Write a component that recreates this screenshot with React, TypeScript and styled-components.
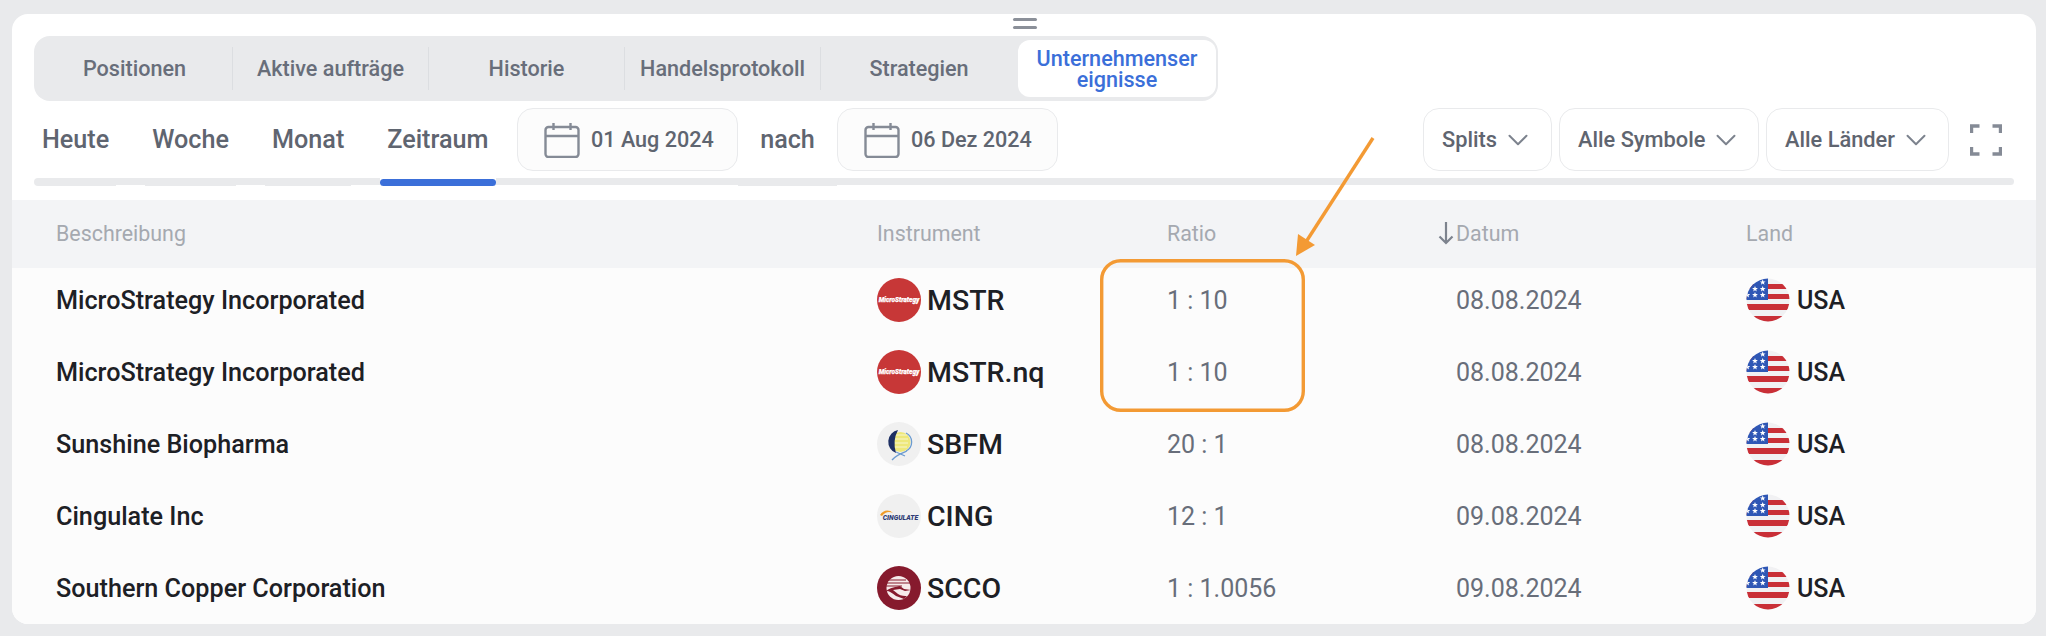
import React from 'react'
import styled, { createGlobalStyle } from 'styled-components'
import { ChevronDown } from 'lucide-react'

const GlobalStyle = createGlobalStyle`
	html, body {
		margin: 0;
		padding: 0;
		background: #e9eaec;
		font-family: Roboto, 'Liberation Sans', sans-serif;
	}
`

const Page = styled.div`
	position: relative;
	width: 2046px;
	height: 636px;
	padding: 14px 10px 12px 12px;
	box-sizing: border-box;
	overflow: hidden;
`

const Card = styled.div`
	height: 610px;
	background: #fff;
	border-radius: 16px;
	overflow: hidden;
	display: flex;
	flex-direction: column;
`

const Handle = styled.div`
	flex: 0 0 22px;
	display: flex;
	flex-direction: column;
	align-items: center;
	gap: 5px;
	padding-top: 4px;
	box-sizing: border-box;
	margin-left: 1px;

	&::before,
	&::after {
		content: '';
		width: 24px;
		height: 3px;
		border-radius: 2px;
		background: #8b9099;
	}
`

const TabBar = styled.div`
	display: flex;
	align-items: center;
	flex: 0 0 65px;
	width: 1184px;
	margin-left: 22px;
	padding-left: 3px;
	background: #e9eaec;
	border-radius: 16px;
	box-sizing: border-box;
`

const Tab = styled.div<{ $active?: boolean; $last?: boolean }>`
	display: flex;
	align-items: center;
	justify-content: center;
	text-align: center;
	flex: none;
	width: ${({ $active }) => ($active ? '198px' : '196px')};
	height: ${({ $active }) => ($active ? '57px' : '43px')};
	margin-left: ${({ $active }) => ($active ? '1px' : '0')};
	font-size: 21.6px;
	line-height: 21px;
	font-weight: 500;
	white-space: nowrap;
	color: ${({ $active }) => ($active ? '#3b6fd9' : '#686e7a')};
	background: ${({ $active }) => ($active ? '#fff' : 'transparent')};
	border-radius: ${({ $active }) => ($active ? '12px' : '0')};
	border-right: ${({ $active, $last }) =>
		$active || $last ? 'none' : '1px solid #dcdee1'};
	box-sizing: border-box;
`

const FilterRow = styled.div`
	display: flex;
	align-items: center;
	flex: 0 0 63px;
	margin: 7px 34px 0 22px;
`

const Period = styled.div`
	font-size: 25.2px;
	font-weight: 500;
	color: #5f6570;
`

const Periods = styled.div`
	display: flex;
	width: 483px;
	gap: 43px;
	padding-left: 8px;
	box-sizing: border-box;
`

const DateButton = styled.div`
	display: flex;
	align-items: center;
	gap: 11px;
	width: 221px;
	height: 63px;
	padding-left: 26px;
	box-sizing: border-box;
	background: #fcfcfc;
	border: 1px solid #e9eaec;
	border-radius: 16px;
	font-size: 21.6px;
	font-weight: 500;
	color: #5f6570;
`

const Nach = styled.div`
	width: 99px;
	text-align: center;
	font-size: 25.2px;
	font-weight: 500;
	color: #5f6570;
`

const Selects = styled.div`
	display: flex;
	align-items: center;
	gap: 7px;
	margin-left: auto;
`

const Select = styled.div<{ $width: number }>`
	display: flex;
	align-items: center;
	gap: 4px;
	width: ${({ $width }) => $width}px;
	height: 63px;
	padding-left: 18px;
	box-sizing: border-box;
	background: #fff;
	border: 1px solid #e9eaec;
	border-radius: 16px;
	font-size: 21.8px;
	font-weight: 500;
	color: #5f6570;
`

const FullscreenButton = styled.div`
	margin-left: 14px;
	display: flex;
`

const Rail = styled.div`
	display: flex;
	flex: 0 0 8px;
	margin: 7px 22px 0 22px;
`

const RailPiece = styled.div<{ $width?: number; $tall?: boolean; $active?: boolean }>`
	flex: ${({ $width }) => ($width ? `0 0 ${$width}px` : '1')};
	height: ${({ $tall }) => ($tall ? '8px' : '7px')};
	margin-top: ${({ $active }) => ($active ? '1px' : '0')};
	background: ${({ $active }) => ($active ? '#3b6fd9' : '#e9eaec')};
	border-radius: ${({ $active }) => ($active ? '4px' : '0')};

	&:first-child {
		border-radius: 4px 0 0 4px;
	}

	&:last-child {
		border-radius: 0 4px 4px 0;
	}
`

const Table = styled.div`
	margin-top: 14px;
	flex: 1;
	min-height: 0;
	background: #fcfcfc;
	display: flex;
	flex-direction: column;
`

const gridColumns = '821px 290px 289px 290px 1fr'

const HeadRow = styled.div`
	display: grid;
	grid-template-columns: ${gridColumns};
	align-items: center;
	flex: 0 0 68px;
	padding: 0 0 2px 44px;
	box-sizing: border-box;
	background: #f3f4f6;
	font-size: 21.4px;
	color: #a5a9b0;
`

const DateHead = styled.div`
	display: flex;
	align-items: center;
	gap: 1px;
	margin-left: -19px;
`

const Row = styled.div`
	display: grid;
	grid-template-columns: ${gridColumns};
	align-items: center;
	flex: 0 0 72px;
	padding-left: 44px;
	box-sizing: border-box;

	&:nth-child(2) {
		flex-basis: 68px;
		padding-bottom: 4px;
	}
`

const Name = styled.div`
	font-size: 25.2px;
	font-weight: 500;
	color: #1d2025;
`

const Instrument = styled.div`
	display: flex;
	align-items: center;
	gap: 6px;
	font-size: 28.5px;
	font-weight: 500;
	color: #1d2025;
`

const Muted = styled.div`
	font-size: 25px;
	color: #686e7a;
`

const Country = styled.div`
	display: flex;
	align-items: center;
	gap: 7px;
	font-size: 25px;
	font-weight: 500;
	color: #1d2025;
`

const Marks = styled.svg`
	position: absolute;
	left: 0;
	top: 0;
	pointer-events: none;
`

const CalendarIcon = () => (
	<svg width="36" height="36" viewBox="0 0 36 36" fill="none">
		<rect x="1.5" y="5" width="33" height="30" rx="3" stroke="#858b96" strokeWidth="2.4" />
		<path d="M1.5 14h33M9.5 1v7M26.5 1v7" stroke="#858b96" strokeWidth="2.4" />
	</svg>
)

const ExpandIcon = () => (
	<svg width="32" height="32" viewBox="0 0 32 32" fill="none" stroke="#858b96" strokeWidth="3.4">
		<path d="M1.5 9V2h8M22.5 2h8v7M1.5 23v7h8M30.5 23v7h-8" />
	</svg>
)

const Logo = ({ symbol }: { symbol: string }) => {
	if (symbol === 'SBFM') {
		return (
			<svg width="44" height="44" viewBox="0 0 44 44">
				<circle cx="22" cy="22" r="22" fill="#f0f0f0" />
				<circle cx="23.5" cy="20" r="10" fill="#eee87a" />
				<path d="M18 13h12M16 17h15M16 21h15M18 25h12" stroke="#f8f6cf" strokeWidth="1" />
				<path d="M21 8A12 12 0 0 0 19 31 30 30 0 0 1 21 8z" fill="#1d2f63" />
				<path d="M29 11a10 10 0 0 1 0 18M30 29c-5 2-11 4-15 9M19 30l9 4" fill="none" stroke="#6b9bd0" strokeWidth="1.3" />
			</svg>
		)
	}
	if (symbol === 'CING') {
		return (
			<svg width="44" height="44" viewBox="0 0 44 44">
				<circle cx="22" cy="22" r="22" fill="#f0f0f0" />
				<path d="M3 21c3-5 9-6 13-2-4-2-8-1-11 3z" fill="#f09a28" />
				<text x="23.5" y="25.8" fontSize="6.8" fontWeight="900" fontStyle="italic" textAnchor="middle" fill="#2d3a73">CINGULATE</text>
			</svg>
		)
	}
	if (symbol === 'SCCO') {
		return (
			<svg width="44" height="44" viewBox="0 0 44 44">
				<circle cx="22" cy="22" r="22" fill="#861a2d" />
				<circle cx="21.5" cy="22" r="12" fill="#f6eaea" />
				<path d="M9 14h20M9 17h24M9 20h16" stroke="#861a2d" strokeWidth="1.2" />
				<path d="M9 25c5-4 10-4 14-5l4 3 7 1-6 1-5-2-7 1 5 4c3 2 7 2 9 2l-3 3-8-3c-4-3-6-5-10-5z" fill="#861a2d" />
			</svg>
		)
	}
	return (
		<svg width="44" height="44" viewBox="0 0 44 44">
			<circle cx="22" cy="22" r="22" fill="#c73737" />
			<text x="22" y="24.3" fontSize="6.5" fontWeight="900" fontStyle="italic" textAnchor="middle" fill="#fff" stroke="#fff" strokeWidth="0.25">MicroStrategy</text>
		</svg>
	)
}

const starSpots = [
	[16.7, 4.3],
	[9, 11],
	[16.7, 11],
	[1.3, 17],
	[9, 17],
	[16.7, 17],
]

const starPoints = '0,-3 0.8,-0.9 2.9,-0.9 1.2,0.4 1.8,2.5 0,1.2 -1.8,2.5 -1.2,0.4 -2.9,-0.9 -0.8,-0.9'

const UsaFlag = ({ id }: { id: string }) => (
	<svg width="44" height="44" viewBox="0 0 44 44">
		<defs>
			<clipPath id={id}>
				<circle cx="22" cy="22" r="21.5" />
			</clipPath>
		</defs>
		<g clipPath={`url(#${id})`}>
			<rect width="44" height="44" fill="#f1f1f3" />
			<path d="M0 6h44v5H0zM0 16h44v5H0zM0 26h44v6H0zM0 38h44v6H0z" fill="#c92f37" />
			<rect width="22" height="22" fill="#2f57b5" />
			{starSpots.map(([x, y]) => (
				<polygon key={`${x}-${y}`} points={starPoints} transform={`translate(${x} ${y})`} fill="#fff" />
			))}
		</g>
	</svg>
)

const rows = [
	{ name: 'MicroStrategy Incorporated', logo: 'MSTR', symbol: 'MSTR', ratio: '1 : 10', date: '08.08.2024' },
	{ name: 'MicroStrategy Incorporated', logo: 'MSTR', symbol: 'MSTR.nq', ratio: '1 : 10', date: '08.08.2024' },
	{ name: 'Sunshine Biopharma', logo: 'SBFM', symbol: 'SBFM', ratio: '20 : 1', date: '08.08.2024' },
	{ name: 'Cingulate Inc', logo: 'CING', symbol: 'CING', ratio: '12 : 1', date: '09.08.2024' },
	{ name: 'Southern Copper Corporation', logo: 'SCCO', symbol: 'SCCO', ratio: '1 : 1.0056', date: '09.08.2024' },
]

const tabs = ['Positionen', 'Aktive aufträge', 'Historie', 'Handelsprotokoll', 'Strategien']

const railPieces = [
	{ width: 82, tall: true },
	{ width: 29 },
	{ width: 91, tall: true },
	{ width: 29 },
	{ width: 86, tall: true },
	{ width: 29 },
	{ width: 116, active: true },
	{ width: 242 },
	{ width: 99, tall: true },
	{},
]

export default function App() {
	return (
		<Page>
			<GlobalStyle />
			<Card>
				<Handle />
				<TabBar>
					{tabs.map((tab, i) => (
						<Tab key={tab} $last={i === tabs.length - 1}>
							{tab}
						</Tab>
					))}
					<Tab $active>
						Unternehmenser
						<br />
						eignisse
					</Tab>
				</TabBar>
				<FilterRow>
					<Periods>
						<Period>Heute</Period>
						<Period>Woche</Period>
						<Period>Monat</Period>
						<Period>Zeitraum</Period>
					</Periods>
					<DateButton>
						<CalendarIcon />
						01 Aug 2024
					</DateButton>
					<Nach>nach</Nach>
					<DateButton>
						<CalendarIcon />
						06 Dez 2024
					</DateButton>
					<Selects>
						<Select $width={129}>
							Splits
							<ChevronDown size={34} strokeWidth={1.4} color="#7d838e" />
						</Select>
						<Select $width={200}>
							Alle Symbole
							<ChevronDown size={34} strokeWidth={1.4} color="#7d838e" />
						</Select>
						<Select $width={183}>
							Alle Länder
							<ChevronDown size={34} strokeWidth={1.4} color="#7d838e" />
						</Select>
						<FullscreenButton>
							<ExpandIcon />
						</FullscreenButton>
					</Selects>
				</FilterRow>
				<Rail>
					{railPieces.map((piece, i) => (
						<RailPiece key={i} $width={piece.width} $tall={piece.tall} $active={piece.active} />
					))}
				</Rail>
				<Table>
					<HeadRow>
						<div>Beschreibung</div>
						<div>Instrument</div>
						<div>Ratio</div>
						<DateHead>
							<svg width="18" height="24" viewBox="0 0 18 24" fill="none" stroke="#7d838e" strokeWidth="2.2">
								<path d="M9 1v21M2.5 15.5 9 22l6.5-6.5" />
							</svg>
							Datum
						</DateHead>
						<div>Land</div>
					</HeadRow>
					{rows.map((row) => (
						<Row key={row.symbol}>
							<Name>{row.name}</Name>
							<Instrument>
								<Logo symbol={row.logo} />
								{row.symbol}
							</Instrument>
							<Muted>{row.ratio}</Muted>
							<Muted>{row.date}</Muted>
							<Country>
								<UsaFlag id={`usa-${row.symbol}`} />
								USA
							</Country>
						</Row>
					))}
				</Table>
			</Card>
			<Marks width="2046" height="636" viewBox="0 0 2046 636" fill="none" stroke="#f39a34" strokeWidth="3.4">
				<rect x="1101.7" y="260.7" width="201.6" height="149.6" rx="19" />
				<path d="M1373 138 1304 245" />
				<path d="M1296 256 1298 234 1315 245z" fill="#f39a34" stroke="none" />
			</Marks>
		</Page>
	)
}
